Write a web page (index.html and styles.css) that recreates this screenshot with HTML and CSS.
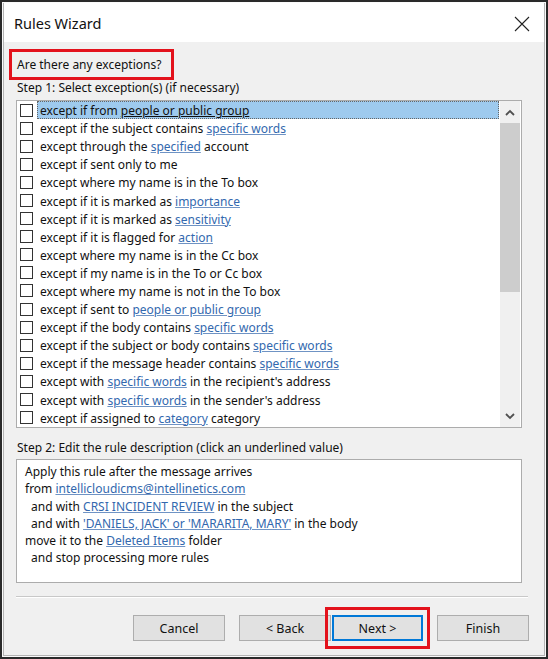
FILE: index.html
```html
<!DOCTYPE html>
<html>
<head>
<meta charset="utf-8">
<link rel="stylesheet" href="styles.css">
</head>
<body>
<div class="frame">
  <div class="window">
    <div class="titlebar">
      <span class="title">Rules Wizard</span>
      <span class="close"><svg width="16" height="16" viewBox="0 0 16 16"><path d="M1 1 L15 15 M15 1 L1 15" stroke="#222" stroke-width="1.1" fill="none"/></svg></span>
    </div>
    <div class="content">
      <div class="question">Are there any exceptions?</div>
      <div class="label step1">Step 1: Select exception(s) (if necessary)</div>
      <div class="listbox">
        <ul class="rows">
          <li class="row selected"><span class="cb"></span><span class="txt">except if from <span class="lnk">people or public group</span></span></li>
          <li class="row"><span class="cb"></span><span class="txt">except if the subject contains <span class="lnk">specific words</span></span></li>
          <li class="row"><span class="cb"></span><span class="txt">except through the <span class="lnk">specified</span> account</span></li>
          <li class="row"><span class="cb"></span><span class="txt">except if sent only to me</span></li>
          <li class="row"><span class="cb"></span><span class="txt">except where my name is in the To box</span></li>
          <li class="row"><span class="cb"></span><span class="txt">except if it is marked as <span class="lnk">importance</span></span></li>
          <li class="row"><span class="cb"></span><span class="txt">except if it is marked as <span class="lnk">sensitivity</span></span></li>
          <li class="row"><span class="cb"></span><span class="txt">except if it is flagged for <span class="lnk">action</span></span></li>
          <li class="row"><span class="cb"></span><span class="txt">except where my name is in the Cc box</span></li>
          <li class="row"><span class="cb"></span><span class="txt">except if my name is in the To or Cc box</span></li>
          <li class="row"><span class="cb"></span><span class="txt">except where my name is not in the To box</span></li>
          <li class="row"><span class="cb"></span><span class="txt">except if sent to <span class="lnk">people or public group</span></span></li>
          <li class="row"><span class="cb"></span><span class="txt">except if the body contains <span class="lnk">specific words</span></span></li>
          <li class="row"><span class="cb"></span><span class="txt">except if the subject or body contains <span class="lnk">specific words</span></span></li>
          <li class="row"><span class="cb"></span><span class="txt">except if the message header contains <span class="lnk">specific words</span></span></li>
          <li class="row"><span class="cb"></span><span class="txt">except with <span class="lnk">specific words</span> in the recipient's address</span></li>
          <li class="row"><span class="cb"></span><span class="txt">except with <span class="lnk">specific words</span> in the sender's address</span></li>
          <li class="row"><span class="cb"></span><span class="txt">except if assigned to <span class="lnk">category</span> category</span></li>
        </ul>
        <div class="scrollbar">
          <div class="sb-btn"><svg width="10" height="7" viewBox="0 0 10 7"><path d="M1 6 L5 2 L9 6" stroke="#505050" stroke-width="1.8" fill="none"/></svg></div>
          <div class="sb-track"><div class="sb-thumb"></div></div>
          <div class="sb-btn"><svg width="10" height="7" viewBox="0 0 10 7"><path d="M1 1 L5 5 L9 1" stroke="#505050" stroke-width="1.8" fill="none"/></svg></div>
        </div>
      </div>
      <div class="label step2">Step 2: Edit the rule description (click an underlined value)</div>
      <div class="desc">
        <div class="dline">Apply this rule after the message arrives</div>
        <div class="dline">from <span class="lnk">intellicloudicms@intellinetics.com</span></div>
        <div class="dline ind">and with <span class="lnk">CRSI INCIDENT REVIEW</span> in the subject</div>
        <div class="dline ind">and with <span class="lnk">'DANIELS, JACK' or 'MARARITA, MARY'</span> in the body</div>
        <div class="dline">move it to the <span class="lnk">Deleted Items</span> folder</div>
        <div class="dline ind">and stop processing more rules</div>
      </div>
      <div class="sep"></div>
      <div class="buttons">
        <button class="btn cancel">Cancel</button>
        <div class="pair">
          <button class="btn">&lt; Back</button>
          <span class="mark"><button class="btn default">Next &gt;</button></span>
        </div>
        <button class="btn">Finish</button>
      </div>
    </div>
  </div>
</div>
</body>
</html>
```
FILE: styles.css
```css
* { box-sizing: border-box; }
html, body { margin: 0; padding: 0; }
body {
  width: 548px;
  height: 659px;
  background: #2a2a2a;
  font-family: "Noto Sans", "Open Sans", sans-serif;
  font-size: 12px;
  color: #111;
}
.frame {
  width: 548px;
  height: 659px;
  padding: 2px;
}
.window {
  width: 544px;
  height: 655px;
  background: #f0f0f0;
  border: 1px solid #fafafa;
  box-shadow: inset 0 0 0 1px #b4b4b4;
  overflow: hidden;
}
.titlebar {
  height: 39px;
  background: #fff;
  display: flex;
  align-items: center;
  justify-content: space-between;
  padding: 0 14px 0 10px;
  margin: 0 1px;
}
.title {
  font-size: 14.5px;
  color: #111;
  padding-top: 1px;
}
.close { display: flex; padding-top: 2px; }
.content {
  padding: 7px 0 0 13px;
}
.question {
  display: inline-block;
  margin-left: -7px;
  border: 3px solid #e3121c;
  height: 31px;
  line-height: 25px;
  padding: 0 10px 0 5px;
}
.label {
  line-height: 16px;
  height: 16px;
  padding-left: 1px;
}
.step1 { margin-bottom: 4px; }
.step2 { margin-top: 12px; }
.listbox {
  width: 506px;
  height: 328px;
  border: 1px solid #acacac;
  background: #fff;
  display: flex;
}
.rows {
  list-style: none;
  margin: 0;
  padding: 0;
  flex: 1;
}
.row {
  height: 18.1px;
  display: flex;
  align-items: center;
  padding-left: 3px;
}
.cb {
  width: 13px;
  height: 13px;
  border: 1px solid #333;
  background: #fff;
  flex: none;
  margin-right: 4px;
}
.txt {
  flex: 1;
  height: 18px;
  line-height: 17px;
  padding-left: 2px;
  border: 1px solid transparent;
  white-space: nowrap;
}
.selected .txt {
  background: #9ecaee;
  border: 1px dotted #666;
}
.lnk {
  color: #3268ae;
  text-decoration: underline;
  text-decoration-color: #6f93c4;
  text-underline-offset: 1px;
}
.selected .lnk { color: #111; text-decoration-color: #111; }
.scrollbar {
  width: 20px;
  background: #f0f0f0;
  display: flex;
  flex-direction: column;
  margin: 0 1px 0 1px;
}
.sb-btn {
  height: 22px;
  display: flex;
  align-items: center;
  justify-content: center;
}
.sb-track { flex: 1; }
.sb-thumb {
  height: 169px;
  background: #cdcdcd;
}
.desc {
  width: 506px;
  height: 124px;
  margin-top: 3px;
  border: 1px solid #acacac;
  background: #fff;
  padding: 3px 0 0 8px;
}
.dline {
  line-height: 17.3px;
  height: 17.3px;
  white-space: nowrap;
}
.dline.ind { padding-left: 6px; }
.sep {
  width: 512px;
  margin-top: 13px;
  background: #c8c8c8;
  border-bottom: 1px solid #fff;
  height: 2px;
}
.buttons {
  display: flex;
  justify-content: flex-end;
  gap: 14px;
  margin-top: 17px;
  padding-right: 16px;
}
.pair { display: flex; gap: 1px; }
.btn {
  width: 92px;
  height: 26px;
  background: #e1e1e1;
  border: 1px solid #adadad;
  font-family: inherit;
  font-size: 12.5px;
  color: #111;
  padding: 0;
  margin: 0;
}
.btn.default {
  border: 2px solid #0078d7;
  width: 91px;
}
.mark {
  position: relative;
  display: flex;
}
.mark::after {
  content: "";
  position: absolute;
  left: -7px;
  top: -8px;
  right: -7px;
  bottom: -8px;
  border: 3px solid #e3121c;
}
```
